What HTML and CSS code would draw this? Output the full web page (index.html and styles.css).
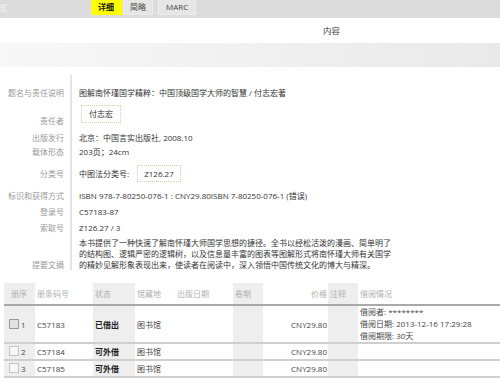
FILE: index.html
```html
<!DOCTYPE html>
<html>
<head>
    <meta charset="utf-8">
    <link rel="stylesheet" href="styles.css">
</head>
<body>
    <div class="topbar">
        <span class="cut">式</span>
        <div class="tabs">
            <span class="tab active">详细</span>
            <span class="tab">简略</span>
            <span class="tab tab-marc">MARC</span>
        </div>
    </div>

    <div class="title-row">
        <span class="title">内容</span>
    </div>
    <div class="band"></div>

    <div class="detail">
        <div class="row r-title">
            <div class="label">题名与责任说明</div>
            <div class="value">图解南怀瑾国学精粹：中国顶级国学大师的智慧 / 付志宏著</div>
        </div>
        <div class="row r-author">
            <div class="label">责任者</div>
            <div class="value"><span class="dot-box">付志宏</span></div>
        </div>
        <div class="row r-pub">
            <div class="label">出版发行</div>
            <div class="value">北京：中国言实出版社, 2008.10</div>
        </div>
        <div class="row r-form">
            <div class="label">载体形态</div>
            <div class="value">203页；24cm</div>
        </div>
        <div class="row r-class">
            <div class="label">分类号</div>
            <div class="value">中图法分类号: <span class="dot-box class-box">Z126.27</span></div>
        </div>
        <div class="row r-isbn">
            <div class="label">标识和获得方式</div>
            <div class="value">ISBN 978-7-80250-076-1 : CNY29.80ISBN 7-80250-076-1 (错误)</div>
        </div>
        <div class="row r-reg">
            <div class="label">登录号</div>
            <div class="value">C57183-87</div>
        </div>
        <div class="row r-call">
            <div class="label">索取号</div>
            <div class="value">Z126.27 / 3</div>
        </div>
        <div class="row r-abstract">
            <div class="label">提要文摘</div>
            <div class="value">本书提供了一种快速了解南怀瑾大师国学思想的捷径。全书以经松活泼的漫画、简单明了<br>的结构图、逻辑严密的逻辑树，以及信息量丰富的图表等图解形式将南怀瑾大师有关国学<br>的精妙见解形象表现出来，使读者在阅读中，深入领悟中国传统文化的博大与精深。</div>
        </div>
    </div>

    <table class="holdings">
        <colgroup>
            <col class="c-seq shade">
            <col class="c-code">
            <col class="c-state shade">
            <col class="c-place">
            <col class="c-date">
            <col class="c-vol shade">
            <col class="c-price">
            <col class="c-note shade">
            <col class="c-loan">
        </colgroup>
        <thead>
            <tr>
                <th class="seq">册序</th>
                <th>册条码号</th>
                <th>状态</th>
                <th>馆藏地</th>
                <th>出版日期</th>
                <th>卷期</th>
                <th class="price">价格</th>
                <th>注释</th>
                <th>借阅情况</th>
            </tr>
        </thead>
        <tbody>
            <tr>
                <td class="seq"><span class="check on"></span>1</td>
                <td>C57183</td>
                <td class="state">已借出</td>
                <td>图书馆</td>
                <td></td>
                <td></td>
                <td class="price">CNY29.80</td>
                <td></td>
                <td class="loan">借阅者: ********<br>借阅日期: 2013-12-16 17:29:28<br>借阅期限: 30天</td>
            </tr>
            <tr>
                <td class="seq"><span class="check"></span>2</td>
                <td>C57184</td>
                <td class="state">可外借</td>
                <td>图书馆</td>
                <td></td>
                <td></td>
                <td class="price">CNY29.80</td>
                <td></td>
                <td></td>
            </tr>
            <tr>
                <td class="seq"><span class="check"></span>3</td>
                <td>C57185</td>
                <td class="state">可外借</td>
                <td>图书馆</td>
                <td></td>
                <td></td>
                <td class="price">CNY29.80</td>
                <td></td>
                <td></td>
            </tr>
        </tbody>
    </table>
</body>
</html>
```

FILE: styles.css
```css
body {
    margin: 0;
    width: 500px;
    height: 378px;
    overflow: hidden;
    background: #fff;
    font-family: "Open Sans", "Noto Sans CJK SC", sans-serif;
    font-size: 8px;
    line-height: 11px;
    color: #333;
}

.topbar {
    display: flex;
    height: 18px;
    background: #dcdcdc;
}

.cut {
    width: 92px;
    margin-left: -1px;
    line-height: 15px;
    color: #f6f6f6;
}

.tabs {
    display: flex;
    align-items: flex-start;
}

.tab {
    height: 14px;
    line-height: 14px;
    padding: 0 6px;
    margin-right: 3px;
    background: #e6e6e6;
    border: 1px solid #ececec;
    border-top: none;
    color: #444;
}

.tab.active {
    width: 17px;
    background: #ffff00;
    border-color: #ffff00;
    color: #111;
    font-weight: bold;
    margin-right: 1px;
}

.tab-marc {
    margin-left: 2px;
    padding: 0 7px;
}

.title-row {
    height: 25px;
    line-height: 25px;
    padding-left: 323px;
}

.title {
    color: #444;
    font-size: 8.5px;
}

.band {
    height: 24px;
    background: linear-gradient(to right, #f8f8f8, #e9e9e9);
}

.detail {
    margin-top: 8px;
}

.row {
    display: grid;
    grid-template-columns: 64px 1fr;
    column-gap: 6px;
}

.label {
    text-align: right;
    color: #999;
    align-self: end;
    white-space: nowrap;
}

.value {
    border-left: 2px solid #e4e4e4;
    padding-left: 7px;
    white-space: nowrap;
}

.r-title .value { padding-top: 12px; }
.r-title .label { align-self: end; }

.r-author .value { padding-top: 7px; padding-bottom: 3px; }

.dot-box {
    display: inline-block;
    height: 16px;
    line-height: 16px;
    padding: 0 7px;
    margin-left: 2px;
    border: 1px dotted #cfd6a4;
}

.r-pub .value { padding-top: 6px; }
.r-form .value { padding-top: 3px; }

.r-class .value { padding-top: 8px; }
.r-class .label { align-self: center; padding-top: 8px; }

.class-box {
    height: 15px;
    line-height: 15px;
    margin-left: 6px;
    padding: 0 6px;
}

.r-isbn .value { padding-top: 8px; }
.r-reg .value { padding-top: 5px; }
.r-call .value { padding-top: 5px; }
.r-abstract .value { padding-top: 4px; }

.holdings {
    margin: 13px 0 0 4px;
    width: 496px;
    table-layout: fixed;
    border-collapse: separate;
    border-spacing: 0;
    white-space: nowrap;
}

.c-seq { width: 31px; }
.c-code { width: 58px; }
.c-state { width: 42px; }
.c-place { width: 40px; }
.c-date { width: 58px; }
.c-vol { width: 30px; }
.c-price { width: 65px; }
.c-note { width: 30px; }
.c-loan { width: 142px; }

.shade {
    background: #eeeeee;
}

.holdings th {
    height: 21px;
    padding: 0 0 0 2px;
    text-align: left;
    font-weight: normal;
    color: #b0b0b0;
    border-bottom: 2px solid #a9a9a9;
}

.holdings td {
    height: 15px;
    padding: 0 0 0 2px;
    color: #444;
    vertical-align: middle;
    border-bottom: 2px solid #cfcfcf;
}

.holdings th.seq {
    padding-left: 7px;
}

.holdings td.seq {
    padding-left: 5px;
}

.holdings .price {
    text-align: right;
    padding: 0 1px 0 0;
}

.holdings td.state {
    font-weight: bold;
    color: #222;
}

.holdings td.loan {
    line-height: 12px;
}

.check {
    display: inline-block;
    width: 8px;
    height: 8px;
    margin-right: 2px;
    vertical-align: -1px;
    border: 1px solid #c4c4c4;
    background: #f7f7f7;
}

.check.on {
    border-color: #9a9a9a;
    background: #e2e2e2;
}
```
